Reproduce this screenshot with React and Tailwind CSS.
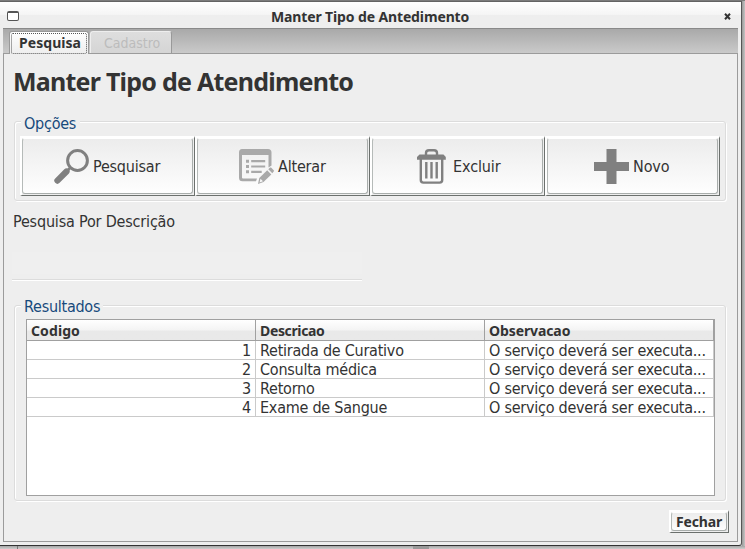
import React from "react";

const actions = [
  { label: "Pesquisar", icon: SearchIcon, pad: "pl-[31px]", text: "ml-[4px] tracking-[-0.2px]" },
  { label: "Alterar", icon: EditIcon, pad: "pl-[41px]", text: "ml-[4px] tracking-[-0.2px]" },
  { label: "Excluir", icon: TrashIcon, pad: "pl-[44px]", text: "ml-[7px] tracking-[-0.1px]" },
  { label: "Novo", icon: PlusIcon, pad: "pl-[46px]", text: "ml-[4px] tracking-[-0.1px]" },
];

const rows = [
  [1, "Retirada de Curativo"],
  [2, "Consulta médica"],
  [3, "Retorno"],
  [4, "Exame de Sangue"],
];

function SearchIcon() {
  return (
    <svg width="35" height="35" viewBox="0 0 35 35" className="shrink-0">
      <circle cx="23.5" cy="11.5" r="9.9" fill="none" stroke="#808080" strokeWidth="3" />
      <path d="M16.5 18.5L14 21" stroke="#808080" strokeWidth="2.6" />
      <path d="M12.5 22.5L3.4 31.6" stroke="#808080" strokeWidth="6.2" strokeLinecap="round" />
    </svg>
  );
}

function EditIcon() {
  return (
    <svg width="35" height="35" viewBox="0 0 35 35" className="shrink-0">
      <path d="M3 0H29Q32.5 0 32.5 3.5V16.5L29.5 18.5V6H3V28.5Q3 29.5 4 29.5H18L17 32.3H3.5Q0 32.3 0 28.8V3.5Q0 0 3 0Z" fill="#a9a9a9" />
      <path d="M7 10.7h3v3H7zM7 16h3v3H7zM7 21.3h3v3H7zM12.2 11h14v2.2h-14zM12.2 16.4h14v2.2h-14zM12.2 21.8h10.5v2.2h-10.5z" fill="#a9a9a9" />
      <path d="M28.2 21.3L32.3 25.4L24.5 33L19 35L20.3 29.1Z" fill="#a9a9a9" />
      <path d="M21.5 29.8L24 32.3L20.6 33.4Z" fill="#f7f7f7" />
      <path d="M29.3 20.2L31 18.6Q31.7 18.2 32.3 18.8L34.7 21.2Q35.3 21.9 34.7 22.6L33.3 24.2Z" fill="#a9a9a9" />
    </svg>
  );
}

function TrashIcon() {
  return (
    <svg width="29" height="35" viewBox="0 0 29 35" className="shrink-0">
      <path d="M9 6V4Q9 1.2 12 1.2H17Q20 1.2 20 4V6" fill="none" stroke="#808080" strokeWidth="2.4" />
      <path d="M2.5 5.6H26.5L28.8 8V10.8H0V8Z" fill="#808080" />
      <path d="M3.8 10V31Q3.8 33.6 6.4 33.6H22.6Q25.2 33.6 25.2 31V10" fill="none" stroke="#808080" strokeWidth="2.4" />
      <path d="M9.3 13V29.6M14.5 13V29.6M19.7 13V29.6" stroke="#808080" strokeWidth="2.4" />
    </svg>
  );
}

function PlusIcon() {
  return (
    <svg width="35" height="35" viewBox="0 0 35 35" className="shrink-0">
      <path d="M12.5 0H22.5V13H35V22H22.5V35H12.5V22H0V13H12.5Z" fill="#808080" />
    </svg>
  );
}

function Group({ title, titleClass, className, children }) {
  return (
    <section className={"relative rounded-[3px] border border-[#dcdcdc] shadow-[1px_1px_0_#fff,inset_1px_1px_0_#fff] " + className}>
      <h2 className={"absolute left-[6px] h-5 bg-[#eeeeee] pl-[3px] text-[16px] leading-5 tracking-[-0.25px] whitespace-nowrap text-[#174a7c] " + titleClass}>{title}</h2>
      {children}
    </section>
  );
}

function ActionButton({ label, icon: Icon, pad, text }) {
  return (
    <button className="flex h-[60px] w-[175px] border-t-2 border-r border-b border-l-2 border-t-white border-r-[#6b706d] border-b-[#6b706d] border-l-white">
      <span className={"flex h-[56px] w-[171px] items-center rounded-[3px] border border-t-white border-r-[#a8adab] border-b-[#a8adab] border-l-[#b5bab8] bg-linear-to-b from-[#ececec] to-[#fefefe] pt-px " + pad}>
        <Icon />
        <span className={"text-[16px] leading-5 text-[#333] " + text}>{label}</span>
      </span>
    </button>
  );
}

export default function App() {
  return (
    <div className="flex h-[549px] w-[745px] flex-col overflow-hidden bg-[#c8c8c8] font-['DejaVu_Sans_Condensed','Noto_Sans',sans-serif] text-[#333]">
      <div className="h-px w-full bg-[#7b7b7b]" />
      <div className="flex h-[545px]">
        <div className="flex w-[742px] flex-col rounded-br-[3px] border-t border-r border-b border-t-[#646464] border-r-[#555] border-b-[#333] bg-[#eeeeee]">
          <header className="flex h-[26px] items-start bg-linear-to-b from-white from-0% via-[#f5f5f5] via-48% to-[#eeeeee] to-50% pl-[7px]">
            <span className="mt-[9px] h-[10px] w-[12px] rounded-[2px] border border-t-2 border-[#555] bg-white" />
            <h1 className="mt-[5px] ml-[252px] w-[440px] font-['Noto_Sans',sans-serif] text-[14px] leading-5 font-bold tracking-[-0.13px] whitespace-nowrap">Manter Tipo de Antedimento</h1>
            <svg width="7" height="7" viewBox="0 0 7 7" className="mt-[11px] ml-[13px]">
              <path d="M1 .8L6 6.2M6 .8L1 6.2" stroke="#333" strokeWidth="2" />
            </svg>
          </header>
          <div className="mr-[3px] ml-[3px] flex h-[26px] items-end border-t border-b border-t-[#8a8a8a] border-b-[#9b9b9b] bg-linear-to-b from-[#a9a9a9] to-[#cacaca] pl-[6px]">
            <div className="-mb-px flex h-[23px] w-[80px] rounded-t-[3px] border border-b-0 border-[#999] bg-linear-to-b from-white to-[#eeeeee] p-px">
              <span className="h-[21px] w-full rounded-[2px] border border-dotted border-[#555] pl-[7px] font-['Noto_Sans',sans-serif] text-[14px] leading-[18px] font-bold tracking-[0.05px] whitespace-nowrap">Pesquisa</span>
            </div>
            <div className="ml-px flex h-[22px] w-[82px] rounded-t-[3px] border border-b-0 border-[#999] border-t-[#eee] border-l-[#eee] bg-linear-to-b from-[#dedede] to-[#d5d5d5] pl-[13px] text-[14px] leading-[23px] text-[#bcbcbc]">Cadastro</div>
          </div>
          <main className="mr-[3px] ml-[3px] flex h-[488px] flex-col border-r border-b border-l border-[#9b9b9b] pl-[9px]">
            <h2 className="mt-[11px] mb-px h-[32px] font-['Noto_Sans',sans-serif] text-[25px] leading-[32px] font-bold tracking-[-0.76px] whitespace-nowrap">Manter Tipo de Atendimento</h2>
            <Group title="Opções" titleClass="-top-[8px] w-[59px]" className="mt-[23px] ml-px h-[80px] w-[712px]">
              <div className="flex pt-[14px] pl-[5px]">
                {actions.map((a) => <ActionButton key={a.label} {...a} />)}
              </div>
            </Group>
            <label className="mt-[11px] h-5 text-[16px] leading-5 tracking-[-0.18px] whitespace-nowrap">Pesquisa Por Descrição</label>
            <div className="mt-[20px] -ml-px h-[29px] w-[350px] border-b border-white">
              <div className="h-[28px] border-b border-[#dcdcdc]">
                <div className="h-[22px] bg-[#efefef]" />
              </div>
            </div>
            <Group title="Resultados" titleClass="-top-[9px] w-[82px]" className="mt-[24px] ml-px h-[196px] w-[712px]">
              <div className="mt-[13px] ml-[11px] h-[177px] w-[689px] border border-[#a0a0a0] bg-white">
                <div className="grid h-[21px] grid-cols-[229px_229px_229px] border-b border-[#a0a0a0] bg-linear-to-b from-white via-[#f4f4f4] via-50% to-[#e9e9e9] to-55% font-['Noto_Sans',sans-serif] text-[14px] leading-[22px] font-bold tracking-[-0.1px]">
                  <span className="border-r border-[#a0a0a0] pl-[4px] tracking-[0.1px]">Codigo</span>
                  <span className="border-r border-[#a0a0a0] pl-[4px] tracking-[-0.35px]">Descricao</span>
                  <span className="border-r border-[#a0a0a0] pl-[4px]">Observacao</span>
                </div>
                {rows.map(([n, d]) => (
                  <div key={n} className="grid h-[19px] grid-cols-[229px_229px_229px] border-b border-[#cacaca] text-[16px] leading-[19px] tracking-[-0.24px] whitespace-nowrap">
                    <span className="border-r border-[#cacaca] pr-[4px] text-right">{n}</span>
                    <span className="border-r border-[#cacaca] pl-[4px]">{d}</span>
                    <span className="border-r border-[#cacaca] pl-[4px]">O serviço deverá ser executa...</span>
                  </div>
                ))}
              </div>
            </Group>
            <button className="mt-[9px] ml-[656px] flex h-[23px] w-[60px] border-t-2 border-r border-b border-l-2 border-t-white border-r-[#6b706d] border-b-[#6b706d] border-l-white">
              <span className="h-[19px] w-[56px] rounded-[3px] border border-t-white border-r-[#a8adab] border-b-[#a8adab] border-l-[#b5bab8] bg-linear-to-b from-[#ececec] to-[#fefefe] pl-[4px] text-left font-['Noto_Sans',sans-serif] text-[14px] leading-[17px] font-bold tracking-[-0.15px]">Fechar</span>
            </button>
          </main>
        </div>
        <div className="w-[3px] bg-linear-to-r from-[#999] to-[#c4c4c4]" />
      </div>
      <div className="flex h-[3px] bg-linear-to-b from-[#a5a5a5] to-[#cfcfcf]">
        <span className="ml-[17px] h-[3px] w-px bg-[#777]" />
        <span className="ml-[395px] h-[3px] w-[16px] bg-[#999]" />
      </div>
    </div>
  );
}
